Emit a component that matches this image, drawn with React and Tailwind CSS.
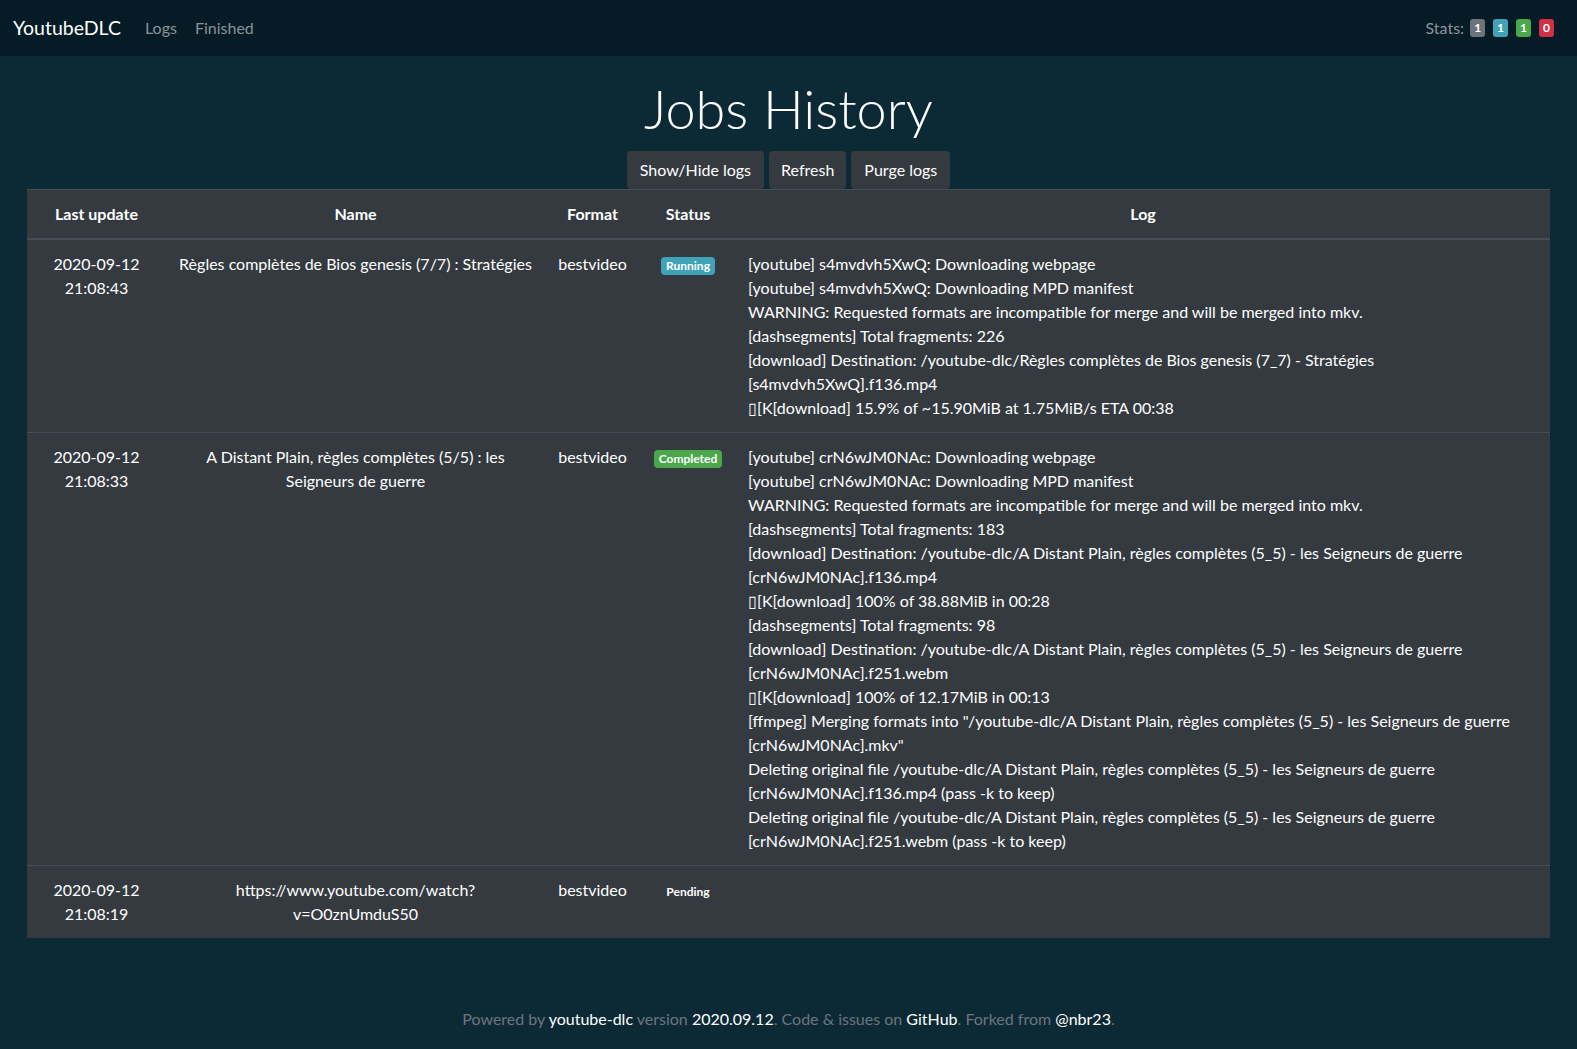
import React from 'react';

const FONT = { fontFamily: 'Lato, "Noto Sans", "Liberation Sans", sans-serif' };

const jobs = [
  {
    date: '2020-09-12',
    time: '21:08:43',
    name: ['Règles complètes de Bios genesis (7/7) : Stratégies'],
    format: 'bestvideo',
    status: 'Running',
    log: [
      '[youtube] s4mvdvh5XwQ: Downloading webpage',
      '[youtube] s4mvdvh5XwQ: Downloading MPD manifest',
      'WARNING: Requested formats are incompatible for merge and will be merged into mkv.',
      '[dashsegments] Total fragments: 226',
      '[download] Destination: /youtube-dlc/Règles complètes de Bios genesis (7_7) - Stratégies',
      '[s4mvdvh5XwQ].f136.mp4',
      '\u25AF[K[download] 15.9% of ~15.90MiB at 1.75MiB/s ETA 00:38',
    ],
  },
  {
    date: '2020-09-12',
    time: '21:08:33',
    name: ['A Distant Plain, règles complètes (5/5) : les', 'Seigneurs de guerre'],
    format: 'bestvideo',
    status: 'Completed',
    log: [
      '[youtube] crN6wJM0NAc: Downloading webpage',
      '[youtube] crN6wJM0NAc: Downloading MPD manifest',
      'WARNING: Requested formats are incompatible for merge and will be merged into mkv.',
      '[dashsegments] Total fragments: 183',
      '[download] Destination: /youtube-dlc/A Distant Plain, règles complètes (5_5) - les Seigneurs de guerre',
      '[crN6wJM0NAc].f136.mp4',
      '\u25AF[K[download] 100% of 38.88MiB in 00:28',
      '[dashsegments] Total fragments: 98',
      '[download] Destination: /youtube-dlc/A Distant Plain, règles complètes (5_5) - les Seigneurs de guerre',
      '[crN6wJM0NAc].f251.webm',
      '\u25AF[K[download] 100% of 12.17MiB in 00:13',
      '[ffmpeg] Merging formats into "/youtube-dlc/A Distant Plain, règles complètes (5_5) - les Seigneurs de guerre',
      '[crN6wJM0NAc].mkv"',
      'Deleting original file /youtube-dlc/A Distant Plain, règles complètes (5_5) - les Seigneurs de guerre',
      '[crN6wJM0NAc].f136.mp4 (pass -k to keep)',
      'Deleting original file /youtube-dlc/A Distant Plain, règles complètes (5_5) - les Seigneurs de guerre',
      '[crN6wJM0NAc].f251.webm (pass -k to keep)',
    ],
  },
  {
    date: '2020-09-12',
    time: '21:08:19',
    name: ['https://www.youtube.com/watch?', 'v=O0znUmduS50'],
    format: 'bestvideo',
    status: 'Pending',
    log: [],
  },
];

const badgeColors = {
  Running: 'bg-[#41a3b8]',
  Completed: 'bg-[#4aa84a]',
  Pending: 'bg-transparent',
};

function StatBadge({ color, children }) {
  return (
    <span className={`inline-block ${color} text-white text-[12px] font-bold leading-none px-[4px] py-[3px] rounded-[3px]`}>
      {children}
    </span>
  );
}

export default function App() {
  return (
    <div className="min-h-[1049px] bg-[#0c2a35] text-white flex flex-col" style={FONT}>
      {/* Navbar */}
      <nav className="h-[56px] bg-[#051b26] flex items-center justify-between pl-[13px] pr-[23px]">
        <div className="flex items-center">
          <span className="text-[19.5px] text-white mr-[24px]">YoutubeDLC</span>
          <span className="text-[16px] text-[#8a939a] mr-[18px]">Logs</span>
          <span className="text-[16px] text-[#8a939a]">Finished</span>
        </div>
        <div className="flex items-center gap-[8px] text-[16px] text-[#8a939a]">
          <span className="mr-[-2px]">Stats:</span>
          <StatBadge color="bg-[#6d737a]">1</StatBadge>
          <StatBadge color="bg-[#41a3b8]">1</StatBadge>
          <StatBadge color="bg-[#4aa84a]">1</StatBadge>
          <StatBadge color="bg-[#d13046]">0</StatBadge>
        </div>
      </nav>

      <main className="flex-1 flex flex-col items-center pt-[21px]">
        <h1 className="text-[54px] font-light leading-[1.2] mb-[9px] text-white">Jobs History</h1>
        <div className="flex gap-[5px]">
          <button className="bg-[#343a40] text-white text-[16px] leading-[24px] px-[13px] py-[7px] rounded-[4px]">Show/Hide logs</button>
          <button className="bg-[#343a40] text-white text-[16px] leading-[24px] px-[12px] py-[7px] rounded-[4px]">Refresh</button>
          <button className="bg-[#343a40] text-white text-[16px] leading-[24px] px-[13px] py-[7px] rounded-[4px]">Purge logs</button>
        </div>

        <div className="self-stretch mx-[27px]">
          <table className="w-full table-fixed border-collapse bg-[#343a40] text-[16px] leading-[24px]">
            <colgroup>
              <col className="w-[139px]" />
              <col className="w-[379px]" />
              <col className="w-[95px]" />
              <col className="w-[96px]" />
              <col />
            </colgroup>
            <thead>
              <tr className="border-t border-[#454d55] border-b-2 border-b-[#454d55]">
                <th className="p-[12px] font-bold text-center">Last update</th>
                <th className="p-[12px] font-bold text-center">Name</th>
                <th className="p-[12px] font-bold text-center">Format</th>
                <th className="p-[12px] font-bold text-center">Status</th>
                <th className="p-[12px] font-bold text-center">Log</th>
              </tr>
            </thead>
            <tbody>
              {jobs.map((job, i) => (
                <tr key={i} className={i > 0 ? 'border-t border-[#454d55] align-top' : 'align-top'}>
                  <td className="p-[12px] text-center">
                    <div>{job.date}</div>
                    <div>{job.time}</div>
                  </td>
                  <td className="p-[12px] text-center">
                    {job.name.map((l, k) => (
                      <div key={k}>{l}</div>
                    ))}
                  </td>
                  <td className="p-[12px] text-center">{job.format}</td>
                  <td className="p-[12px] text-center">
                    <span className={`inline-block ${badgeColors[job.status]} text-white text-[12px] font-bold leading-none px-[5px] py-[3px] rounded-[4px]`}>
                      {job.status}
                    </span>
                  </td>
                  <td className="p-[12px] text-left">
                    {job.log.map((l, k) => (
                      <div key={k} className="whitespace-nowrap">{l}</div>
                    ))}
                  </td>
                </tr>
              ))}
            </tbody>
          </table>
        </div>
      </main>

      <footer className="text-center text-[16px] text-[#6c757d] pb-[18px]">
        Powered by <span className="text-white">youtube-dlc</span> version <span className="text-white">2020.09.12</span>. Code &amp; issues on{' '}
        <span className="text-white">GitHub</span>. Forked from <span className="text-white">@nbr23</span>.
      </footer>
    </div>
  );
}
